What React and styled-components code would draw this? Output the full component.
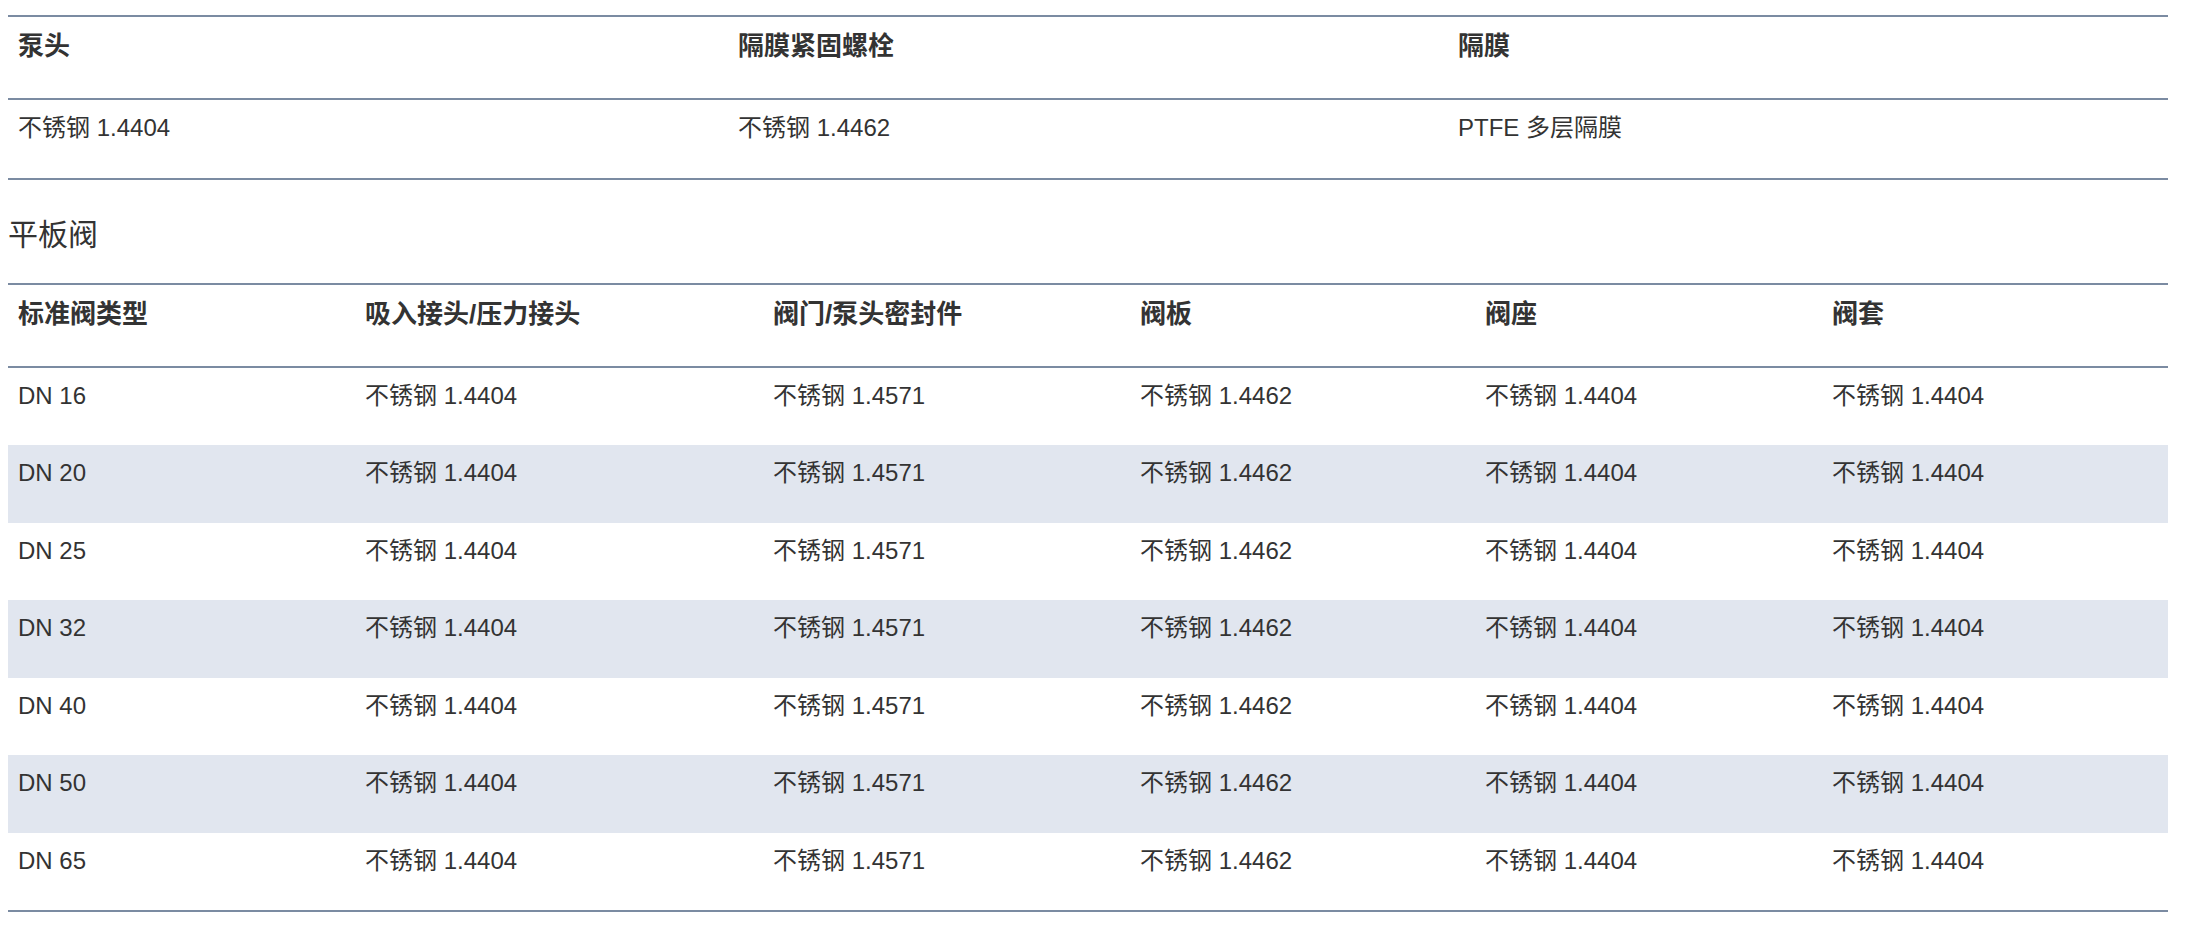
import React from 'react';
import styled, { createGlobalStyle } from 'styled-components';

const GlobalStyle = createGlobalStyle`
  body {
    margin: 8px;
    background: #ffffff;
    font-family: "Liberation Sans", "Noto Sans CJK SC", sans-serif;
    color: #333333;
  }
`;

const Page = styled.div`
  width: 2160px;
  padding-top: 7px;
`;

const Table = styled.table`
  width: 100%;
  border-collapse: collapse;
  table-layout: fixed;
  border-top: 2px solid #7b8ba2;
  border-bottom: 2px solid #7b8ba2;
`;

const HeadRow = styled.tr`
  border-bottom: 2px solid #7b8ba2;
`;

const HeadCell = styled.th`
  text-align: left;
  vertical-align: top;
  font-size: 26px;
  line-height: 30px;
  font-weight: 700;
  color: #333333;
  padding: 14px 10px 37px;
`;

const Row = styled.tr`
  background: ${({ $striped }) => ($striped ? '#e1e6ef' : '#ffffff')};
`;

const Cell = styled.td`
  vertical-align: top;
  font-size: 24px;
  line-height: 30px;
  color: #333333;
  padding: 13px 10px 34.5px;
`;

const Title = styled.h3`
  margin: 36px 0 29px;
  font-size: 30px;
  line-height: 38px;
  font-weight: 400;
  color: #333333;
`;

const pumpHead = ['泵头', '隔膜紧固螺栓', '隔膜'];
const pumpValues = ['不锈钢 1.4404', '不锈钢 1.4462', 'PTFE 多层隔膜'];

const valveCols = [347, 408, 367, 345, 347, 346];
const valveHead = ['标准阀类型', '吸入接头/压力接头', '阀门/泵头密封件', '阀板', '阀座', '阀套'];
const sizes = ['DN 16', 'DN 20', 'DN 25', 'DN 32', 'DN 40', 'DN 50', 'DN 65'];
const valveMaterials = ['不锈钢 1.4404', '不锈钢 1.4571', '不锈钢 1.4462', '不锈钢 1.4404', '不锈钢 1.4404'];

export default function App() {
  return (
    <Page>
      <GlobalStyle />
      <Table>
        <thead>
          <HeadRow>
            {pumpHead.map((h) => (
              <HeadCell key={h}>{h}</HeadCell>
            ))}
          </HeadRow>
        </thead>
        <tbody>
          <Row>
            {pumpValues.map((v, i) => (
              <Cell key={i}>{v}</Cell>
            ))}
          </Row>
        </tbody>
      </Table>

      <Title>平板阀</Title>

      <Table>
        <colgroup>
          {valveCols.map((w, i) => (
            <col key={i} style={{ width: w }} />
          ))}
        </colgroup>
        <thead>
          <HeadRow>
            {valveHead.map((h) => (
              <HeadCell key={h}>{h}</HeadCell>
            ))}
          </HeadRow>
        </thead>
        <tbody>
          {sizes.map((s, i) => (
            <Row key={s} $striped={i % 2 === 1}>
              <Cell>{s}</Cell>
              {valveMaterials.map((m, j) => (
                <Cell key={j}>{m}</Cell>
              ))}
            </Row>
          ))}
        </tbody>
      </Table>
    </Page>
  );
}
